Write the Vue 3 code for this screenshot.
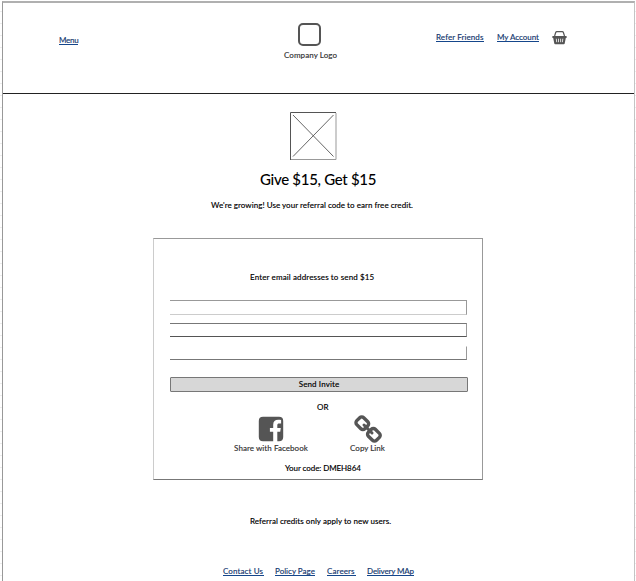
<script setup>
const fields = ['first', 'second', 'third']
const footerLinks = [
  { label: 'Contact Us', name: 'contact' },
  { label: 'Policy Page', name: 'policy' },
  { label: 'Careers', name: 'careers' },
  { label: 'Delivery MAp', name: 'delivery' },
]
</script>

<template>
  <div class="canvas">
    <div class="page">
      <header class="header">
        <a class="link menu">Menu</a>
        <div class="brand">
          <span class="brand-box"></span>
          <span class="brand-name">Company Logo</span>
        </div>
        <nav class="account">
          <a class="link refer">Refer Friends</a>
          <a class="link my-account">My Account</a>
          <svg class="basket" viewBox="0 0 15 14">
            <path d="M2.600 5 3.700 1.500Q4 .7 4.800.7h5.500q.8 0 1.100.8L12.500 5" fill="none" stroke="#555" stroke-width="1.200" />
            <path d="M.4 5.100h14.200v1.800h-.8l-1.100 5.600q-.1.8-.9.8H3.200q-.8 0-.9-.8L1.200 6.900H.4z" fill="#555" />
            <path d="M4.300 7.700l.4 3.500M6.500 7.700v3.500M8.600 7.700v3.500M10.800 7.700l-.4 3.500" stroke="#fff" stroke-width=".8" />
          </svg>
        </nav>
      </header>

      <main class="main">
        <svg class="placeholder" viewBox="0 0 47 48">
          <path d="M.5 48V.5H46" fill="none" stroke="#555" />
          <path d="M46 1v46.500H1" fill="none" stroke="#999" />
          <path d="M3 3l40.500 41.500M43.500 3l-40.500 41.500" stroke="#555" stroke-width=".9" />
        </svg>
        <h1 class="title">Give $15, Get $15</h1>
        <p class="intro">We're growing! Use your referral code to earn free credit.</p>

        <section class="card">
          <p class="prompt">Enter email addresses to send $15</p>
          <div class="fields">
            <input v-for="field in fields" :key="field" class="field" :class="field" type="text" />
          </div>
          <button class="send"><span>Send Invite</span></button>
          <p class="or">OR</p>
          <div class="shares">
            <div class="share facebook">
              <svg class="share-icon" viewBox="0 0 26 26">
                <path d="M5 .8h16q4.200 0 4.200 4.200v16q0 4.200-4.200 4.200h-1.700v-9.500h2.900l.6-3.800h-3.500V9.300c0-1.100.5-1.700 1.900-1.700h1.900V4c-.7-.1-1.600-.2-2.900-.2-3.200 0-5 1.800-5 5v3.100h-3.300v3.800h3.300v9.500H5Q.8 25.200.8 21V5Q.8.8 5 .8z" fill="#555" />
              </svg>
              <span>Share with Facebook</span>
            </div>
            <div class="share copy">
              <svg class="share-icon" viewBox="0 0 26 26">
                <g fill="none" stroke="#555" stroke-width="3.400" stroke-linecap="round" stroke-linejoin="round">
                  <rect x="-5.700" y="-4.900" width="11.400" height="9.800" rx="2.800" transform="translate(7.300 7.200) rotate(45)" />
                  <rect x="-5.700" y="-4.900" width="11.400" height="9.800" rx="2.800" transform="translate(18.900 18.800) rotate(45)" />
                  <path d="M9 9l8 8" stroke-width="3" />
                </g>
              </svg>
              <span>Copy Link</span>
            </div>
          </div>
          <p class="code">Your code: DMEH864</p>
        </section>

        <p class="note">Referral credits only apply to new users.</p>
      </main>

      <footer class="footer">
        <a v-for="item in footerLinks" :key="item.name" class="link" :class="item.name">{{ item.label }}</a>
      </footer>
    </div>
  </div>
</template>

<style>
body {
  margin: 0;
  overflow: hidden;
}
</style>

<style scoped>
* {
  box-sizing: border-box;
}
.canvas {
  width: 636px;
  height: 581px;
  padding: 1px 1px 0 2px;
  overflow: hidden;
  background: repeating-linear-gradient(#fff 0 11px, #ededed 11px 12px);
  font: 500 8px/10px Lato, "Open Sans", sans-serif;
  color: #000;
  white-space: nowrap;
  -webkit-text-stroke: 0.1px currentColor;
}
.page {
  width: 633px;
  height: 580px;
  border: 1px solid #999;
  border-top: 2px solid #b0b0b0;
  border-right-color: #c4c4c4;
  border-bottom: 0;
  background: #fff;
}
p, h1 {
  margin: 0;
  font-weight: 500;
}
.header {
  display: grid;
  grid-template-columns: 281px 53px 1fr;
  align-items: start;
  height: 91px;
  border-bottom: 1px solid #222;
}
.link {
  display: block;
  height: 10px;
  border-bottom: 1px solid #15468b;
  color: #15396f;
  line-height: 10px;
}
.menu {
  width: 19px;
  margin: 32px 0 0 56px;
  letter-spacing: -0.25px;
}
.brand {
  display: flex;
  flex-direction: column;
  align-items: center;
  padding-top: 20px;
}
.brand-box {
  width: 23px;
  height: 23px;
  margin-right: 2px;
  border: 2px solid #555;
  border-radius: 5px;
}
.brand-name {
  margin-top: 4px;
  color: #333;
  letter-spacing: 0.06px;
}
.account {
  display: flex;
  padding: 29px 0 0 99px;
}
.refer {
  width: 48px;
  margin-right: 13px;
  letter-spacing: 0.08px;
}
.my-account {
  width: 42px;
  margin-right: 13px;
  letter-spacing: -0.04px;
}
.basket {
  width: 15px;
  height: 14px;
  margin-top: -1px;
}
.main {
  display: flex;
  flex-direction: column;
  align-items: center;
  height: 468px;
  padding-top: 18px;
}
.placeholder {
  width: 47px;
  height: 48px;
  margin-right: 11px;
}
.title {
  width: 117px;
  margin: 9px 0 0;
  font-size: 15px;
  line-height: 20px;
  letter-spacing: -0.3px;
  -webkit-text-stroke: 0;
}
.title,
.intro,
.card,
.note {
  align-self: flex-start;
}
.title {
  margin-left: 257px;
}
.intro {
  margin: 11px 0 0 208px;
  letter-spacing: 0.03px;
}
.card {
  display: flex;
  flex-direction: column;
  width: 330px;
  height: 242px;
  margin: 28px 0 0 150px;
  padding: 33px 14px 0 16px;
  border: 1px solid #999;
  border-left-color: #ccc;
  border-bottom-color: #777;
}
.prompt {
  margin-left: 80px;
  letter-spacing: 0.12px;
}
.fields {
  display: flex;
  flex-direction: column;
  margin-top: 18px;
}
.field {
  width: 297px;
  height: 15px;
  padding: 0;
  border: 1px solid #999;
  border-left: 0;
  border-radius: 0;
  outline: 0;
  background: #fff;
}
.first {
  border-bottom-color: #ccc;
}
.second {
  height: 14px;
  margin-top: 8px;
  border-top-color: #777;
  border-bottom-color: #555;
}
.third {
  height: 14px;
  margin-top: 9px;
  border-top-color: transparent;
  border-bottom-color: #777;
}
.send {
  width: 298px;
  height: 15px;
  margin-top: 17px;
  padding: 0;
  border: 1px solid #777;
  border-radius: 1px;
  background: #d7d7d7;
  color: #000;
  font: inherit;
  letter-spacing: 0.1px;
  line-height: 13px;
}
.or {
  margin: 10px 0 0 147px;
}
.shares {
  display: flex;
  margin: 4px 0 0 64px;
}
.share {
  display: flex;
  flex-direction: column;
  align-items: center;
  color: #333;
}
.facebook {
  width: 74px;
}
.facebook span {
  letter-spacing: 0.05px;
}
.copy {
  width: 35px;
  margin-left: 42px;
}
.share-icon {
  width: 26px;
  height: 26px;
  margin-bottom: 1px;
  overflow: visible;
}
.code {
  margin: 10px 0 0 115px;
  letter-spacing: -0.08px;
}
.note {
  margin: 36px 0 0 247px;
  letter-spacing: 0.03px;
}
.footer {
  display: flex;
  margin-left: 220px;
  padding-top: 4px;
}
.contact {
  width: 41px;
  margin-right: 11px;
  letter-spacing: 0.1px;
}
.policy {
  width: 40px;
  margin-right: 12px;
}
.careers {
  width: 29px;
  margin-right: 11px;
  letter-spacing: 0.1px;
}
.delivery {
  width: 47px;
  letter-spacing: -0.15px;
}
</style>
